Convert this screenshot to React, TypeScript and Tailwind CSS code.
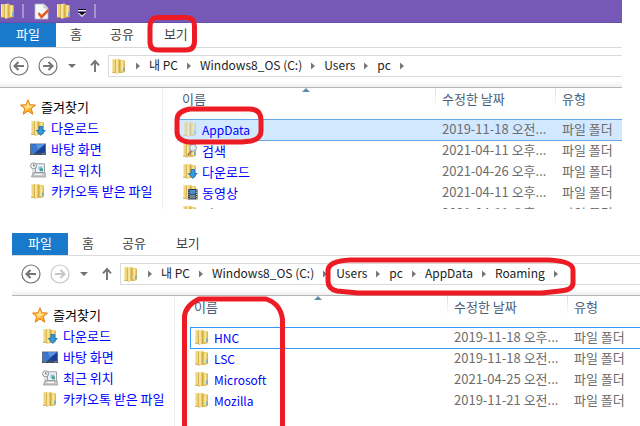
import React from 'react';

type IconKind = 'folder' | 'faded' | 'download' | 'search' | 'video' | 'desktop' | 'recent';

function Folder({ faded = false }: { faded?: boolean }) {
  return (
    <g opacity={faded ? 0.5 : 1}>
      <path d="M1 1.200h5v13H1z" fill="#efd67c" />
      <path d="M1 1.200h1v13H1z" fill="#f8ebb0" />
      <path d="M8 2h5l.8.8v10.800L8 15z" fill="#ebcf6a" />
      <path d="M10.500 3h1.800v10.400h-1.800z" fill="#f7e7a2" />
      <path d="M4.500 1.600L8 .5l1.500 1v13L6 15.800l-1.500-1z" fill="#f6e59a" />
      <path d="M7.500 1.800l2-.3v13l-2 .8z" fill="#cfac45" />
      <path d="M4.500 1.600v13.200l1.300.8" fill="none" stroke="#cdaa48" strokeWidth=".8" />
      <path d="M1 14.200l3.500.4M9.500 14.600l4.300-1" stroke="#c29d3c" strokeWidth=".8" />
      <path d="M13.400 3v10" stroke="#cba945" strokeWidth=".8" />
      <path d="M12.300 9.500h1.200V13h-1.200z" fill="#4fa6e4" />
    </g>
  );
}

function Icon({ kind }: { kind: IconKind }) {
  return (
    <svg viewBox="0 0 16 16" className="size-4 shrink-0" aria-hidden="true">
      {kind === 'desktop' ? (
        <>
          <path d="M0 2.5h16v11.5H0z" fill="#63738a" />
          <path d="M1 3.3h14v8.6H1z" fill="#173f91" />
          <path d="M1 3.3h14L5 11.9H1z" fill="#3c77cf" />
          <path d="M6 3.3h9L8 8z" fill="#5b97e2" />
          <path d="M0 12.2h16V14H0z" fill="#3b4a5e" />
          <path d="M1 12.9h3M12 12.9h3" stroke="#9fb4cb" strokeWidth=".7" />
        </>
      ) : kind === 'recent' ? (
        <>
          <path d="M5.5 1.8h9v9h-9z" fill="#eef3f6" stroke="#9b9fa3" />
          <path d="M8.5 4.5h4v4h-4z" fill="#86c3e1" />
          <path d="M10 6.5h3v2.8h-3z" fill="#4c9d8b" />
          <path d="M3 10.5h12l1 4.5H1.5z" fill="#c5c8ca" stroke="#94989b" strokeWidth=".8" />
          <path d="M5 12.4h7" stroke="#fff" />
          <circle cx="3.6" cy="3.8" r="3" fill="#f4f5f5" stroke="#8e9295" />
          <path d="M3.6 2v2h1.6" fill="none" stroke="#55595c" strokeWidth=".8" />
          <path d="M3 7.3v3M5 7.2v3" stroke="#a2a6a9" strokeWidth=".7" />
        </>
      ) : (
        <Folder faded={kind === 'faded'} />
      )}
      {kind === 'download' && (
        <path d="M9 6.5h3.6v4h2.6L10.8 15.4 6.4 10.5H9z" fill="#2f9ce6" stroke="#1668ab" strokeWidth=".8" />
      )}
      {kind === 'search' && (
        <>
          <path d="M9.3 8.8 5.8 13.6" stroke="#a87955" strokeWidth="1.8" />
          <circle cx="11" cy="5.8" r="3.4" fill="#dcecf7" stroke="#9ba3a9" />
          <path d="M9.5 5.2q1-1.5 2.4-1.1" fill="none" stroke="#fff" />
        </>
      )}
      {kind === 'video' && (
        <>
          <path d="M6 5h9.5v10.5H6z" fill="#33373c" />
          <path d="M8 6h5.5v3.8H8z" fill="#4793d5" />
          <path d="M8 10.6h5.5v4H8z" fill="#6e8795" />
          <path d="M7 5.6v10M14.5 5.6v10" stroke="#eee" strokeWidth=".9" strokeDasharray="1 1.2" />
        </>
      )}
    </svg>
  );
}

function Star() {
  return (
    <svg viewBox="0 0 16 16" className="size-4 shrink-0" aria-hidden="true">
      <path d="M8 .8l2 5 5.5.3-4.2 3.6 1.5 5.5L8 12.1l-4.8 3.1 1.5-5.5L.5 6.1 6 5.8z" fill="#fbb52c" stroke="#e27b1d" />
      <path d="M8 2.6l1.2 4 4 .3-4 2.2L5 11l.7-2.7L2.8 6.9l3.6-.2z" fill="#ffe38a" />
    </svg>
  );
}

function ArrowButton({ label, left = false, faded = false }: { label: string; left?: boolean; faded?: boolean }) {
  return (
    <button aria-label={label} className={faded ? 'text-[#c6c6c6]' : 'text-[#757575]'}>
      <svg viewBox="0 0 20 20" className="block size-5" fill="none" stroke="currentColor">
        <circle cx="10" cy="10" r="9" strokeWidth="1.2" />
        <path d={left ? 'M15 10H6M9.5 6L5.5 10l4 4' : 'M5 10h9M10.5 6l4 4-4 4'} strokeWidth="2.1" />
      </svg>
    </button>
  );
}

function Chevron() {
  return (
    <svg viewBox="0 0 4 8" className="h-2 w-1 shrink-0" aria-hidden="true">
      <path d="M0 0.5L4 4 0 7.5z" fill="#777" />
    </svg>
  );
}

function Ribbon({ short = false }: { short?: boolean }) {
  return (
    <div className="border-b border-[#d9dadb]">
      <nav aria-label="리본" className={`flex text-[13px] leading-5 text-[#444] ${short ? 'h-[22px]' : 'h-6'}`}>
        <button className="w-14 bg-[#1979ca] pb-0.5 text-white">파일</button>
        <button className="px-3.5 pb-0.5">홈</button>
        <button className="px-3.5 pb-0.5">공유</button>
        <button className="px-4 pb-0.5">보기</button>
      </nav>
    </div>
  );
}

function AddressBar({ crumbs, canForward }: { crumbs: string[]; canForward: boolean }) {
  return (
    <div className="flex h-10 items-start border-b border-[#b4b6b8] bg-linear-to-b from-white from-85% to-[#f0f0f0] pt-[7px]">
      <div className="flex h-[22px] w-27 shrink-0 items-center pl-[9px]">
        <ArrowButton label="뒤로" left />
        <span className="w-[9px]" />
        <ArrowButton label="앞으로" faded={!canForward} />
        <button aria-label="최근 위치" className="ml-2.5">
          <svg viewBox="0 0 8 4" className="h-1 w-2">
            <path d="M0 0h8L4 4z" fill="#707070" />
          </svg>
        </button>
        <button aria-label="위로" className="ml-3.5">
          <svg viewBox="0 0 10 14" className="h-3.5 w-2.5" fill="none" stroke="#757575" strokeWidth="1.9">
            <path d="M5 13V2M1 6.3L5 2l4 4.3" />
          </svg>
        </button>
      </div>
      <nav aria-label="주소" className="flex h-[22px] min-w-0 flex-1 items-center gap-[9px] overflow-hidden border-y border-l border-[#d9dadb] bg-white pl-0.5 text-xs whitespace-nowrap text-[#222]">
        <Icon kind="folder" />
        <Chevron />
        {crumbs.map((crumb) => (
          <React.Fragment key={crumb}>
            <a href="#" className="pb-0.5">{crumb}</a>
            <Chevron />
          </React.Fragment>
        ))}
      </nav>
    </div>
  );
}

const places: { name: string; icon: IconKind }[] = [
  { name: '다운로드', icon: 'download' },
  { name: '바탕 화면', icon: 'desktop' },
  { name: '최근 위치', icon: 'recent' },
  { name: '카카오톡 받은 파일', icon: 'folder' },
];

function Favorites() {
  return (
    <aside className="w-[163px] shrink-0 border-r border-[#eeeff1] pt-2 text-[13px] whitespace-nowrap">
      <h2 className="flex h-[21px] items-center gap-[5px] pl-5 text-black">
        <Star />
        즐겨찾기
      </h2>
      <ul className="pl-[30px] text-[#0000ff]">
        {places.map((place) => (
          <li key={place.name}>
            <a href="#" className="flex h-[21px] items-center gap-[5px]">
              <Icon kind={place.icon} />
              {place.name}
            </a>
          </li>
        ))}
      </ul>
    </aside>
  );
}

interface Row {
  name: string;
  date: string;
  icon: IconKind;
}

const divider = 'bg-[linear-gradient(#cfe0f2,#ffffff)] bg-[length:1px_21px] bg-no-repeat';

function FileTable({ rows, focusOnly = false }: { rows: Row[]; focusOnly?: boolean }) {
  const current = focusOnly
    ? 'shadow-[inset_1px_1px_#3399ff,inset_-1px_0_#3399ff,0_1px_#3399ff]'
    : 'bg-[#d1e8ff] shadow-[inset_1px_1px_#66a7e8,0_1px_#66a7e8]';
  return (
    <div className="min-w-0 flex-1 overflow-hidden pl-[15px]">
      <table className="w-[calc(100%+4px)] table-fixed border-separate border-spacing-0 text-left text-[13px] whitespace-nowrap">
        <colgroup>
          <col className="w-[257px]" />
          <col className="w-[120px]" />
          <col />
        </colgroup>
        <thead className="leading-[22px] text-[#4c607a]">
          <tr className="h-[31px] align-top">
            <th className="relative p-0 pl-1 font-normal">
              이름
              <svg viewBox="0 0 8 4" className="absolute top-0 left-31 h-1 w-2" aria-hidden="true">
                <path d="M4 0l4 4H0z" fill="#5f8da9" />
              </svg>
            </th>
            <th className={`p-0 pl-[7px] font-normal ${divider}`}>수정한 날짜</th>
            <th className={`p-0 pl-[7px] font-normal ${divider}`}>유형</th>
          </tr>
        </thead>
        <tbody className="leading-[19px] text-[#6d6d6d]">
          {rows.map((row, i) => (
            <tr key={row.name} className={`h-[21px] align-top ${i === 0 ? current : ''}`}>
              <td className="p-0 pl-1">
                <a href="#" className={`flex h-5 items-center gap-1 leading-[19px] text-[#0000ff] ${/^[A-Z]/.test(row.name) ? 'text-xs leading-[19px]' : ''}`}>
                  <Icon kind={row.icon} />
                  {row.name}
                </a>
              </td>
              <td className="p-0 pl-[7px]">{row.date}...</td>
              <td className="p-0 pl-[7px]">파일 폴더</td>
            </tr>
          ))}
        </tbody>
      </table>
    </div>
  );
}

const userRows: Row[] = [
  { name: 'AppData', date: '2019-11-18 오전', icon: 'faded' },
  { name: '검색', date: '2021-04-11 오후', icon: 'search' },
  { name: '다운로드', date: '2021-04-26 오후', icon: 'download' },
  { name: '동영상', date: '2021-04-11 오후', icon: 'video' },
  { name: '링크', date: '2021-04-11 오후', icon: 'folder' },
];

const roamingRows: Row[] = [
  { name: 'HNC', date: '2019-11-18 오후', icon: 'folder' },
  { name: 'LSC', date: '2019-11-18 오전', icon: 'folder' },
  { name: 'Microsoft', date: '2021-04-25 오전', icon: 'folder' },
  { name: 'Mozilla', date: '2019-11-21 오전', icon: 'folder' },
];

function QuickAccess() {
  return (
    <header className="flex h-[23px] items-center border-b border-[#6a4da8] bg-[#7659b7]">
      <Icon kind="folder" />
      <span className="ml-1.5 h-3.5 w-0.5 bg-[#a894d2]" />
      <button aria-label="속성" className="ml-2.5">
        <svg viewBox="0 0 16 17" className="block h-[17px] w-4">
          <path d="M1 1h9l4 4v11H1z" fill="#f7f8fa" stroke="#b5b5c3" strokeWidth=".8" />
          <path d="M10 1v4h4" fill="#dcdde5" stroke="#a9a9b8" strokeWidth=".7" />
          <path d="M4.5 10l3 4L14.5 7" fill="none" stroke="#e45d29" strokeWidth="2.6" />
        </svg>
      </button>
      <button aria-label="새 폴더" className="ml-1.5">
        <Icon kind="folder" />
      </button>
      <button aria-label="빠른 실행 도구 모음 사용자 지정" className="ml-1.5">
        <svg viewBox="0 0 8 8" className="mt-1 block size-2">
          <path d="M0 0h8v1H0z" fill="#111" />
          <path d="M0 1h8v1H0z" fill="#fff" />
          <path d="M0 4h8L4 8z" fill="#fff" />
          <path d="M0 3h8L4 6.500z" fill="#111" />
        </svg>
      </button>
      <span className="ml-2 h-3.5 w-0.5 bg-[#a894d2]" />
    </header>
  );
}

function Highlights() {
  return (
    <svg
      className="pointer-events-none absolute top-0 left-0 h-full w-[640px]"
      fill="none"
      stroke="#ed1c24"
      strokeWidth="5"
      strokeLinejoin="round"
      aria-hidden="true"
    >
      <path d="M157 17.5H187Q194.5 18 194.5 26V41Q194.5 50 186 50H158Q150 50 150 42V27Q150 18 157 17.5Z" />
      <path d="M190 109H249Q261 109 261 120V131Q261 139 251 141L242 142H188Q177 140 177 132V120Q177 111 190 109Z" />
      <path d="M350 260H548Q573 261 573 270V283Q573 290 560 291L542 293H358L337 291Q328 289 328 281V270Q329 261 350 260Z" />
      <path d="M184.5 440V317Q185 306 199 299H266Q281 304 282.5 320V440" />
    </svg>
  );
}

export default function App() {
  return (
    <main className="relative flex min-h-screen flex-col overflow-hidden bg-white font-['Noto_Sans_CJK_KR',sans-serif]">
      <section aria-label="pc" className="mr-[18px]">
        <QuickAccess />
        <Ribbon />
        <AddressBar crumbs={['내 PC', 'Windows8_OS (C:)', 'Users', 'pc']} canForward />
        <div className="flex h-[121px] overflow-hidden">
          <Favorites />
          <FileTable rows={userRows} />
        </div>
      </section>
      <section aria-label="Roaming" className="mt-6 ml-3 flex flex-1 flex-col">
        <Ribbon short />
        <AddressBar crumbs={['내 PC', 'Windows8_OS (C:)', 'Users', 'pc', 'AppData', 'Roaming']} canForward={false} />
        <div className="flex flex-1">
          <Favorites />
          <FileTable rows={roamingRows} focusOnly />
        </div>
      </section>
      <Highlights />
    </main>
  );
}
